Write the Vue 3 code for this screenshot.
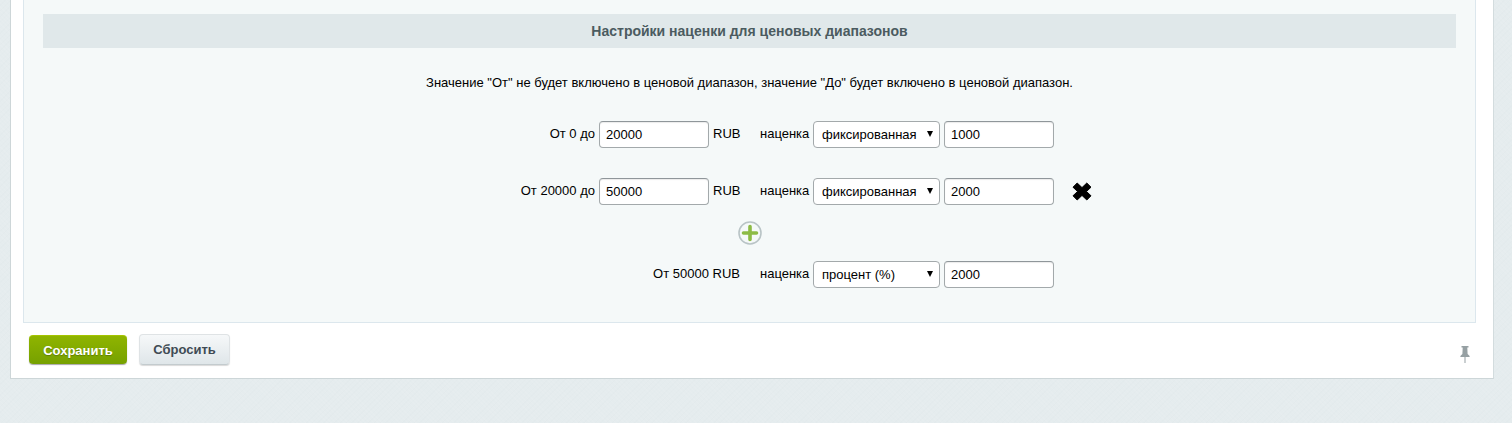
<script setup>
const rows = [
  { from: 'От 0 до', to: '20000', type: 'фиксированная', value: '1000' },
  { from: 'От 20000 до', to: '50000', type: 'фиксированная', value: '2000', removable: true },
]
</script>

<template>
  <div class="page">
    <div class="panel">
      <div class="inner">
        <div class="heading">Настройки наценки для ценовых диапазонов</div>
        <p class="note">Значение "От" не будет включено в ценовой диапазон, значение "До" будет включено в ценовой диапазон.</p>
        <div class="rows">
          <template v-for="row in rows" :key="row.from">
            <div class="row">
              <span class="from">{{ row.from }}</span>
              <input class="field to" type="text" :value="row.to" />
              <span class="cur">RUB</span>
              <span class="lbl">наценка</span>
              <span class="sel">
                <select class="select"><option>{{ row.type }}</option></select>
                <svg class="arrow" width="6" height="6" viewBox="0 0 6 6"><path d="M0 0h6L3 6z" fill="#000" /></svg>
              </span>
              <input class="field val" type="text" :value="row.value" />
              <svg v-if="row.removable" class="del" width="20" height="19" viewBox="0 0 20 19">
                <path d="M5.200 1 10 5.600 14.800 1 19 5.200 14.500 9.500 19 13.800 14.800 18 10 13.400 5.200 18 1 13.800 5.500 9.500 1 5.200z" fill="#000" stroke="#000" stroke-linejoin="round" />
              </svg>
            </div>
          </template>
          <div class="add">
            <svg width="24" height="24" viewBox="0 0 24 24">
              <circle cx="12" cy="12" r="11" fill="#f5f9f9" stroke="#b9c4c6" stroke-width="1.6" />
              <path d="M12 5.500v13M5.500 12h13" stroke="#8cbb45" stroke-width="3.6" stroke-linecap="round" />
            </svg>
          </div>
          <div class="row last">
            <span class="from wide">От 50000 RUB</span>
            <span class="lbl">наценка</span>
            <span class="sel">
              <select class="select"><option>процент (%)</option></select>
              <svg class="arrow" width="6" height="6" viewBox="0 0 6 6"><path d="M0 0h6L3 6z" fill="#000" /></svg>
            </span>
            <input class="field val" type="text" value="2000" />
          </div>
        </div>
      </div>
      <div class="footer">
        <button class="btn save" type="button">Сохранить</button>
        <button class="btn reset" type="button">Сбросить</button>
        <svg class="pin" width="10" height="17" viewBox="0 0 10 17">
          <path d="M1.500 0h7v1.500H7.300L7.600 8 9.600 10v1H5.500v6h-1v-6H.4v-1l2-2L2.700 1.500H1.500z" fill="#96a0a3" />
        </svg>
      </div>
    </div>
  </div>
</template>

<style scoped>
.page {
  height: 423px;
  box-sizing: border-box;
  padding-left: 10px;
  overflow: hidden;
  background-color: #e5ecee;
  background-image:
    repeating-linear-gradient(45deg, rgba(255, 255, 255, 0.06) 0 1px, transparent 1px 3px),
    repeating-linear-gradient(-45deg, rgba(190, 205, 208, 0.05) 0 1px, transparent 1px 4px);
  font-family: "Liberation Sans", Arial, sans-serif;
  font-size: 13px;
  color: #000;
}
.panel {
  width: 1484px;
  height: 379px;
  box-sizing: border-box;
  background: #fff;
  border-left: 1px solid #cdd6d8;
  border-right: 1px solid #d3dcde;
  border-bottom: 1px solid #cdd6d8;
  padding-left: 12px;
  position: relative;
}
.inner {
  width: 1453px;
  height: 323px;
  box-sizing: border-box;
  background: #f5f9f9;
  border-left: 1px solid #dce7ed;
  border-right: 1px solid #dce7ed;
  border-bottom: 1px solid #dce7ed;
  padding: 14px 19px 0;
}
.heading {
  height: 34px;
  line-height: 34px;
  background: #e0e8ea;
  text-align: center;
  font-size: 14px;
  font-weight: bold;
  color: #4b5b60;
}
.note {
  margin: 27px 0 0;
  line-height: 16px;
  text-align: center;
}
.rows {
  margin-top: 30px;
  display: flex;
  flex-direction: column;
}
.row {
  display: flex;
  align-items: center;
  height: 27px;
  margin-bottom: 30px;
}
.row:nth-child(2) {
  margin-bottom: 16px;
}
.row.last {
  margin-bottom: 0;
}
.from {
  width: 552px;
  margin-right: 4px;
  text-align: right;
  flex: none;
  position: relative;
  top: -1px;
}
.from.wide {
  width: 697px;
  margin-right: 20px;
}
.field {
  box-sizing: border-box;
  height: 27px;
  width: 110px;
  padding: 0 5px 0 6px;
  border: 1px solid #a3a9ab;
  border-top-color: #8f969a;
  border-radius: 4px;
  background: #fff;
  box-shadow: inset 0 1px 1px rgba(0, 0, 0, 0.08);
  font: 13px "Liberation Sans", Arial, sans-serif;
  color: #000;
  outline: none;
  flex: none;
}
.cur {
  width: 47px;
  margin-left: 4px;
  flex: none;
  position: relative;
  top: -1px;
}
.lbl {
  width: 53px;
  flex: none;
  position: relative;
  top: -1px;
}
.sel {
  position: relative;
  display: block;
  width: 127px;
  height: 27px;
  margin-right: 4px;
  flex: none;
}
.select {
  appearance: none;
  -webkit-appearance: none;
  display: block;
  width: 100%;
  height: 100%;
  box-sizing: border-box;
  padding: 0 20px 0 8px;
  border: 1px solid #a3a9ab;
  border-radius: 4px;
  background: #fff;
  font: 13px "Liberation Sans", Arial, sans-serif;
  color: #000;
  outline: none;
}
.arrow {
  position: absolute;
  right: 7px;
  top: 10px;
  pointer-events: none;
}
.del {
  margin-left: 18px;
  flex: none;
}
.add {
  display: flex;
  justify-content: center;
  height: 24px;
  margin-bottom: 16px;
}
.footer {
  height: 55px;
  position: relative;
}
.btn {
  position: absolute;
  box-sizing: border-box;
  font: bold 13px "Liberation Sans", Arial, sans-serif;
  border-radius: 4px;
  padding: 0;
}
.save {
  left: 6px;
  top: 12px;
  width: 98px;
  height: 29px;
  border: 0;
  border-top: 1px solid #a5c400;
  background: linear-gradient(#8fb400, #76a100);
  box-shadow: 0 1px 1px rgba(0, 0, 0, 0.35);
  color: #fff;
  text-shadow: 0 1px 1px rgba(0, 0, 0, 0.25);
}
.reset {
  left: 116px;
  top: 11px;
  width: 91px;
  height: 31px;
  border: 1px solid #dfe3e5;
  border-bottom-color: #c3cbce;
  background: linear-gradient(#f6f8f9, #dfe6e9);
  box-shadow: 0 1px 1px rgba(0, 0, 0, 0.15);
  color: #3f4b54;
}
.pin {
  position: absolute;
  right: 23px;
  top: 23px;
}
</style>
